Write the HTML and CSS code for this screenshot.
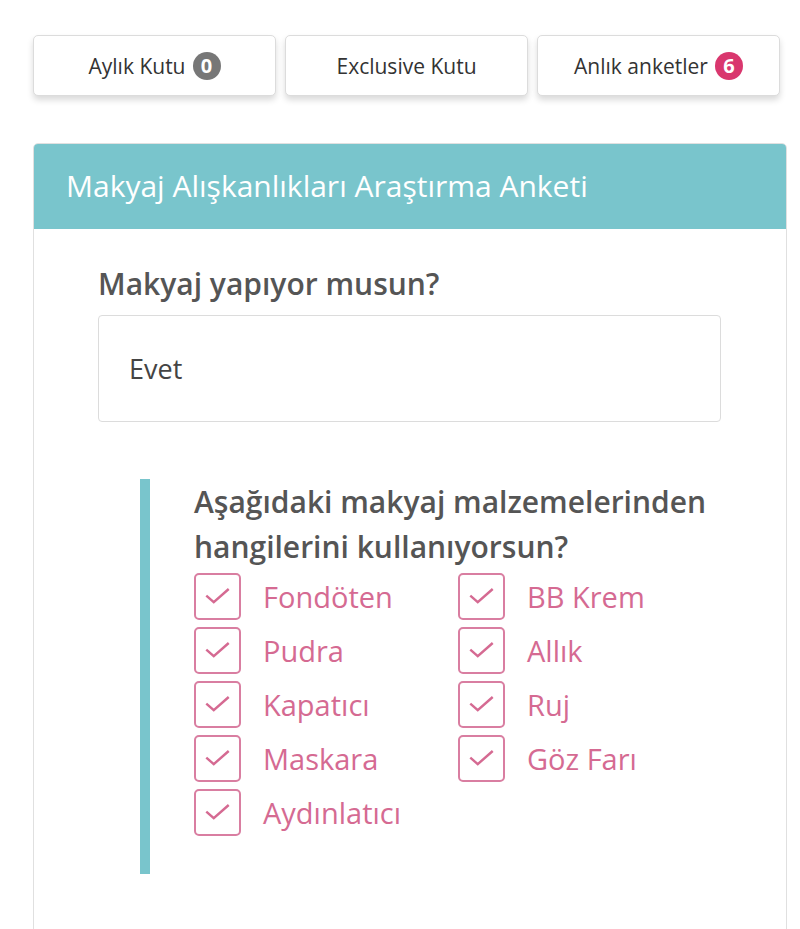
FILE: index.html
```html
<!DOCTYPE html>
<html>
<head>
    <meta charset="UTF-8">
    <title>Anketler</title>
    <link rel="stylesheet" href="styles.css">
</head>
<body>
    <div class="tabs">
        <div class="tab">Aylık Kutu <span class="badge badge-gray">0</span></div>
        <div class="tab">Exclusive Kutu</div>
        <div class="tab">Anlık anketler <span class="badge badge-pink">6</span></div>
    </div>

    <div class="survey-card">
        <div class="survey-header">Makyaj Alışkanlıkları Araştırma Anketi</div>
        <div class="survey-body">
            <h2 class="question">Makyaj yapıyor musun?</h2>
            <div class="answer-box">Evet</div>

            <div class="sub-question">
                <h2 class="question">Aşağıdaki makyaj malzemelerinden hangilerini kullanıyorsun?</h2>
                <div class="options">
                    <label class="option"><span class="check"><svg viewBox="0 0 46 46"><polyline points="11,22 19,29 35,15"/></svg></span>Fondöten</label>
                    <label class="option"><span class="check"><svg viewBox="0 0 46 46"><polyline points="11,22 19,29 35,15"/></svg></span>BB Krem</label>
                    <label class="option"><span class="check"><svg viewBox="0 0 46 46"><polyline points="11,22 19,29 35,15"/></svg></span>Pudra</label>
                    <label class="option"><span class="check"><svg viewBox="0 0 46 46"><polyline points="11,22 19,29 35,15"/></svg></span>Allık</label>
                    <label class="option"><span class="check"><svg viewBox="0 0 46 46"><polyline points="11,22 19,29 35,15"/></svg></span>Kapatıcı</label>
                    <label class="option"><span class="check"><svg viewBox="0 0 46 46"><polyline points="11,22 19,29 35,15"/></svg></span>Ruj</label>
                    <label class="option"><span class="check"><svg viewBox="0 0 46 46"><polyline points="11,22 19,29 35,15"/></svg></span>Maskara</label>
                    <label class="option"><span class="check"><svg viewBox="0 0 46 46"><polyline points="11,22 19,29 35,15"/></svg></span>Göz Farı</label>
                    <label class="option"><span class="check"><svg viewBox="0 0 46 46"><polyline points="11,22 19,29 35,15"/></svg></span>Aydınlatıcı</label>
                </div>
            </div>
        </div>
    </div>
</body>
</html>
```

FILE: styles.css
```css
* {
    margin: 0;
    padding: 0;
    box-sizing: border-box;
    font-family: 'Open Sans', 'Noto Sans', sans-serif;
}

body {
    background-color: white;
    padding: 35px 13px 0 33px;
    overflow: hidden;
}

.tabs {
    display: flex;
    gap: 9px;
    margin-bottom: 47px;
}

.tab {
    width: 243px;
    height: 61px;
    display: flex;
    justify-content: center;
    align-items: center;
    gap: 7px;
    background-color: white;
    border: 1px solid #dcdcdc;
    border-radius: 5px;
    box-shadow: 0 4px 6px rgba(0, 0, 0, 0.15);
    color: #333;
    font-size: 21px;
}

.badge {
    display: inline-flex;
    justify-content: center;
    align-items: center;
    width: 28px;
    height: 28px;
    border-radius: 50%;
    color: white;
    font-size: 20px;
    font-weight: 700;
}

.badge-gray {
    background-color: #777;
}

.badge-pink {
    background-color: #d9376e;
}

.survey-card {
    width: 754px;
    border: 1px solid #e0e0e0;
    border-radius: 5px 5px 0 0;
    min-height: 800px;
}

.survey-header {
    background-color: #79c5cc;
    color: white;
    font-size: 30px;
    line-height: 40px;
    height: 85px;
    padding: 22px 0 0 32px;
    border-radius: 4px 4px 0 0;
}

.survey-body {
    padding: 35px 65px 0 64px;
}

.question {
    color: #555;
    font-size: 30px;
    font-weight: 600;
    line-height: 45px;
}

.survey-body > .question {
    line-height: 40px;
    margin-bottom: 11px;
}

.answer-box {
    height: 107px;
    border: 1px solid #dcdcdc;
    border-radius: 4px;
    padding: 0 30px;
    display: flex;
    align-items: center;
    color: #444;
    font-size: 27px;
    margin-bottom: 57px;
}

.sub-question {
    margin-left: 42px;
    border-left: 10px solid #79c5cc;
    padding: 0 0 38px 44px;
}

.options {
    display: grid;
    grid-template-columns: 264px 264px;
    row-gap: 7px;
    margin-top: 4px;
}

.option {
    display: flex;
    align-items: center;
    gap: 22px;
    color: #d56a92;
    font-size: 29px;
    height: 47px;
}

.check {
    width: 47px;
    height: 47px;
    border: 2px solid #d97ea1;
    border-radius: 5px;
    display: flex;
}

.check svg {
    width: 100%;
    height: 100%;
    fill: none;
    stroke: #d56a92;
    stroke-width: 2.6;
}
```
